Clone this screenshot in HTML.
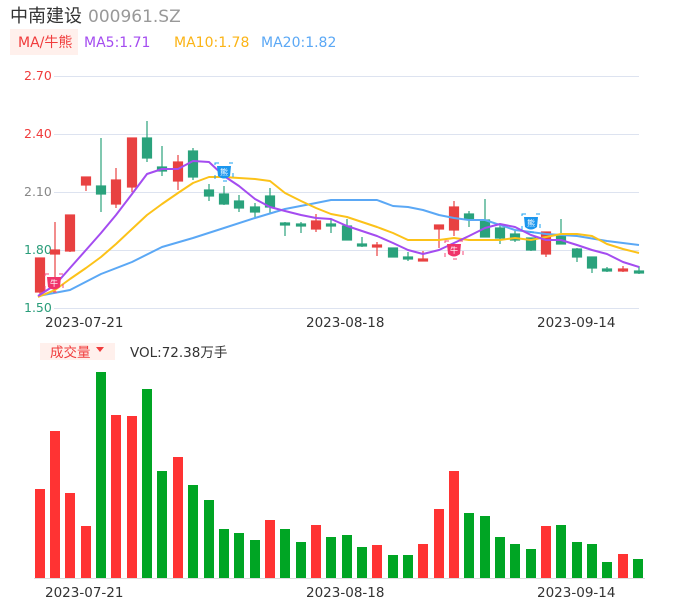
<!DOCTYPE html>
<html><head><meta charset="utf-8"><style>
body{margin:0;width:686px;height:606px;background:#fff;overflow:hidden;font-family:"Liberation Sans","Noto Sans CJK SC",sans-serif;}
svg text{font-family:"DejaVu Sans","Noto Sans CJK SC",sans-serif;}
</style></head><body>
<svg width="686" height="606" viewBox="0 0 686 606" xmlns="http://www.w3.org/2000/svg">
<text x="10" y="22" font-size="18" fill="#333" font-family="Noto Sans CJK SC,sans-serif">中南建设</text>
<text x="88" y="22" font-size="17" fill="#999">000961.SZ</text>
<rect x="10" y="29" width="68" height="26" fill="#fff0ec"/>
<text x="18" y="47" font-size="14" fill="#f03c3c">MA/牛熊</text>
<text x="84" y="47" font-size="14" fill="#a44cf0">MA5:1.71</text>
<text x="174" y="47" font-size="14" fill="#fbb416">MA10:1.78</text>
<text x="261" y="47" font-size="14" fill="#5ba8f5">MA20:1.82</text>
<g stroke="#dde3f0" stroke-width="1">
<line x1="54" y1="76.5" x2="639" y2="76.5"/><line x1="54" y1="134.5" x2="639" y2="134.5"/><line x1="54" y1="192.5" x2="639" y2="192.5"/><line x1="54" y1="250.5" x2="639" y2="250.5"/><line x1="54" y1="308.5" x2="639" y2="308.5"/>
</g>
<g font-size="12.5">
<text x="24" y="80" fill="#f03c3c">2.70</text><text x="24" y="138" fill="#f03c3c">2.40</text><text x="24" y="196" fill="#888">2.10</text><text x="24" y="254" fill="#2a9d7a">1.80</text><text x="24" y="312" fill="#2a9d7a">1.50</text>
</g>
<g font-size="13.5" fill="#333">
<text x="45" y="327">2023-07-21</text><text x="306" y="327">2023-08-18</text><text x="537" y="327">2023-09-14</text>
<text x="45" y="597">2023-07-21</text><text x="306" y="597">2023-08-18</text><text x="537" y="597">2023-09-14</text>
</g>
<g id="candles" stroke-width="1.2">
<g stroke="#e84141" fill="#e84141">
<line x1="40" y1="258" x2="40" y2="295"/><rect x="35.5" y="258" width="9" height="34"/>
<line x1="55" y1="222" x2="55" y2="292"/><rect x="50.5" y="250" width="9" height="4"/>
<line x1="70" y1="215" x2="70" y2="252"/><rect x="65.5" y="215" width="9" height="36"/>
<line x1="86" y1="177" x2="86" y2="191"/><rect x="81.5" y="177" width="9" height="8"/>
<line x1="116" y1="168" x2="116" y2="208"/><rect x="111.5" y="180" width="9" height="24"/>
<line x1="132" y1="138" x2="132" y2="192"/><rect x="127.5" y="138" width="9" height="49"/>
<line x1="178" y1="155" x2="178" y2="190"/><rect x="173.5" y="162" width="9" height="19"/>
<line x1="316" y1="214" x2="316" y2="232"/><rect x="311.5" y="221" width="9" height="8"/>
<line x1="377" y1="242" x2="377" y2="256"/><rect x="372.5" y="245" width="9" height="2"/>
<line x1="423" y1="251" x2="423" y2="261"/><rect x="418.5" y="259" width="9" height="2"/>
<line x1="439" y1="225" x2="439" y2="248"/><rect x="434.5" y="225" width="9" height="4"/>
<line x1="454" y1="201" x2="454" y2="236"/><rect x="449.5" y="207" width="9" height="23"/>
<line x1="546" y1="232" x2="546" y2="257"/><rect x="541.5" y="232" width="9" height="22"/>
<line x1="623" y1="266" x2="623" y2="272"/><rect x="618.5" y="269" width="9" height="2"/>
</g>
<g stroke="#2aa27c" fill="#2aa27c">
<line x1="101" y1="138" x2="101" y2="212"/><rect x="96.5" y="186" width="9" height="8"/>
<line x1="147" y1="121" x2="147" y2="162"/><rect x="142.5" y="138" width="9" height="20"/>
<line x1="162" y1="146" x2="162" y2="176"/><rect x="157.5" y="167" width="9" height="4"/>
<line x1="193" y1="148" x2="193" y2="180"/><rect x="188.5" y="151" width="9" height="26"/>
<line x1="209" y1="184" x2="209" y2="201"/><rect x="204.5" y="190" width="9" height="6"/>
<line x1="224" y1="186" x2="224" y2="205"/><rect x="219.5" y="194" width="9" height="10"/>
<line x1="239" y1="195" x2="239" y2="212"/><rect x="234.5" y="201" width="9" height="7"/>
<line x1="255" y1="203" x2="255" y2="217"/><rect x="250.5" y="207" width="9" height="5"/>
<line x1="270" y1="188" x2="270" y2="213"/><rect x="265.5" y="196" width="9" height="11"/>
<line x1="285" y1="222" x2="285" y2="236"/><rect x="280.5" y="223" width="9" height="2"/>
<line x1="301" y1="222" x2="301" y2="233"/><rect x="296.5" y="224" width="9" height="2"/>
<line x1="331" y1="219" x2="331" y2="233"/><rect x="326.5" y="224" width="9" height="2"/>
<line x1="347" y1="219" x2="347" y2="240"/><rect x="342.5" y="226" width="9" height="14"/>
<line x1="362" y1="237" x2="362" y2="247"/><rect x="357.5" y="244" width="9" height="2"/>
<line x1="393" y1="248" x2="393" y2="257"/><rect x="388.5" y="248" width="9" height="9"/>
<line x1="408" y1="252" x2="408" y2="261"/><rect x="403.5" y="257" width="9" height="2"/>
<line x1="469" y1="211" x2="469" y2="227"/><rect x="464.5" y="214" width="9" height="5"/>
<line x1="485" y1="199" x2="485" y2="237"/><rect x="480.5" y="220" width="9" height="17"/>
<line x1="500" y1="225" x2="500" y2="244"/><rect x="495.5" y="228" width="9" height="10"/>
<line x1="515" y1="231" x2="515" y2="242"/><rect x="510.5" y="234" width="9" height="6"/>
<line x1="531" y1="238" x2="531" y2="251"/><rect x="526.5" y="238" width="9" height="12"/>
<line x1="561" y1="219" x2="561" y2="244"/><rect x="556.5" y="236" width="9" height="8"/>
<line x1="577" y1="248" x2="577" y2="262"/><rect x="572.5" y="249" width="9" height="8"/>
<line x1="592" y1="257" x2="592" y2="273"/><rect x="587.5" y="257" width="9" height="11"/>
<line x1="607" y1="267" x2="607" y2="272"/><rect x="602.5" y="269" width="9" height="2"/>
<line x1="639" y1="266" x2="639" y2="274"/><rect x="634.5" y="271" width="9" height="2"/>
</g>
</g>
<g fill="none" stroke-width="2" stroke-linejoin="round">
<polyline stroke="#5ba8f5" points="38,296 70,290 101,274 132,262 162,247 193,238 224,228 255,218 285,209 316,203 331,200 347,200 377,200 393,206 408,207 423,210 439,215 454,218 469,220 485,220 515,230 546,234 577,236 607,241 639,245"/>
<polyline stroke="#fcc219" points="38,297 55,290 70,279 86,268 101,257 116,244 132,229 147,215 162,204 178,193 193,183 209,177 224,177 239,178 255,179 270,181 285,193 301,201 316,208 331,214 347,217 362,222 377,227 393,233 408,240 423,240 439,240 454,238 469,240 485,240 500,240 515,238 531,240 546,237 561,234 577,234 592,236 607,244 623,249 639,253"/>
<polyline stroke="#a44cf0" points="38,296 55,285 70,268 86,250 101,233 116,215 132,194 147,174 162,169 178,169 193,161 209,162 224,176 239,186 255,199 270,207 285,211 301,215 316,218 331,219 347,226 362,231 377,236 393,243 408,250 423,254 439,250 454,243 469,236 485,228 500,224 515,227 531,235 546,240 561,240 577,245 592,250 607,254 623,262 639,267"/>
</g>
<g>
<g transform="translate(54,283)"><rect x="-9" y="-9" width="18" height="18" fill="none" stroke="#f5487a" stroke-width="1" stroke-dasharray="4 10" /><path d="M-7,-6 L7,-6 L6,4 Q0,9 -6,4 Z" fill="#f0346a"/><text x="0" y="3" font-size="8" fill="#fff" text-anchor="middle">牛</text></g>
<g transform="translate(454,250)"><rect x="-9" y="-9" width="18" height="18" fill="none" stroke="#f5487a" stroke-width="1" stroke-dasharray="4 10" /><path d="M-7,-6 L7,-6 L6,4 Q0,9 -6,4 Z" fill="#f0346a"/><text x="0" y="3" font-size="8" fill="#fff" text-anchor="middle">牛</text></g>
<g transform="translate(224,172)"><rect x="-9" y="-9" width="18" height="18" fill="none" stroke="#1aa0f0" stroke-width="1" stroke-dasharray="4 10" /><path d="M-7,-6 L7,-6 L6,4 Q0,9 -6,4 Z" fill="#1a96ee"/><text x="0" y="3" font-size="8" fill="#fff" text-anchor="middle">熊</text></g>
<g transform="translate(531,223)"><rect x="-9" y="-9" width="18" height="18" fill="none" stroke="#1aa0f0" stroke-width="1" stroke-dasharray="4 10" /><path d="M-7,-6 L7,-6 L6,4 Q0,9 -6,4 Z" fill="#1a96ee"/><text x="0" y="3" font-size="8" fill="#fff" text-anchor="middle">熊</text></g>
</g>
<rect x="40" y="343" width="75" height="17" fill="#fff0ec"/>
<text x="50" y="357" font-size="13.5" fill="#f03c3c" font-family="Noto Sans CJK SC,sans-serif">成交量</text>
<path d="M96,347 L104,347 L100,352 Z" fill="#f03c3c"/>
<text x="130" y="357" font-size="13.5" fill="#333">VOL:72.38万手</text>
<line x1="34" y1="578.5" x2="645" y2="578.5" stroke="#ddd"/>
<g fill="#ff3333">
<rect x="35" y="489" width="10" height="89"/><rect x="50" y="431" width="10" height="147"/><rect x="65" y="493" width="10" height="85"/><rect x="81" y="526" width="10" height="52"/>
<rect x="111" y="415" width="10" height="163"/><rect x="127" y="416" width="10" height="162"/><rect x="173" y="457" width="10" height="121"/>
<rect x="265" y="520" width="10" height="58"/><rect x="311" y="525" width="10" height="53"/><rect x="372" y="545" width="10" height="33"/>
<rect x="418" y="544" width="10" height="34"/><rect x="434" y="509" width="10" height="69"/><rect x="449" y="471" width="10" height="107"/>
<rect x="541" y="526" width="10" height="52"/><rect x="618" y="554" width="10" height="24"/>
</g>
<g fill="#00a524">
<rect x="96" y="372" width="10" height="206"/><rect x="142" y="389" width="10" height="189"/><rect x="157" y="471" width="10" height="107"/>
<rect x="188" y="485" width="10" height="93"/><rect x="204" y="500" width="10" height="78"/><rect x="219" y="529" width="10" height="49"/>
<rect x="234" y="533" width="10" height="45"/><rect x="250" y="540" width="10" height="38"/><rect x="280" y="529" width="10" height="49"/>
<rect x="296" y="542" width="10" height="36"/><rect x="326" y="537" width="10" height="41"/><rect x="342" y="535" width="10" height="43"/>
<rect x="357" y="547" width="10" height="31"/><rect x="388" y="555" width="10" height="23"/><rect x="403" y="555" width="10" height="23"/>
<rect x="464" y="513" width="10" height="65"/><rect x="480" y="516" width="10" height="62"/><rect x="495" y="537" width="10" height="41"/>
<rect x="510" y="544" width="10" height="34"/><rect x="526" y="549" width="10" height="29"/><rect x="556" y="525" width="10" height="53"/>
<rect x="572" y="542" width="10" height="36"/><rect x="587" y="544" width="10" height="34"/><rect x="602" y="562" width="10" height="16"/>
<rect x="633" y="559" width="10" height="19"/>
</g>
</svg>
</body></html>
